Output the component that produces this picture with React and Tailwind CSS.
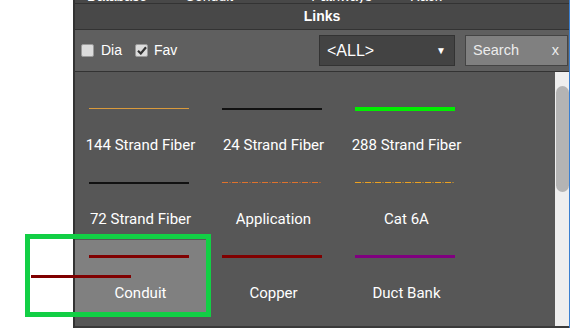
import React from 'react';

const items = [
  { name: '144 Strand Fiber', kind: 'solid', color: '#d99a3c', h: 1 },
  { name: '24 Strand Fiber', kind: 'solid', color: '#111111', h: 2 },
  { name: '288 Strand Fiber', kind: 'solid', color: '#00ee00', h: 4 },
  { name: '72 Strand Fiber', kind: 'solid', color: '#111111', h: 2 },
  { name: 'Application', kind: 'dash', color: '#e0722c', h: 1 },
  { name: 'Cat 6A', kind: 'dash', color: '#eea21e', h: 1 },
  { name: 'Conduit', kind: 'solid', color: '#800000', h: 3, active: true },
  { name: 'Copper', kind: 'solid', color: '#800000', h: 3 },
  { name: 'Duct Bank', kind: 'solid', color: '#800080', h: 3 },
];

function Swatch({ item }) {
  if (item.kind === 'dash') {
    return (
      <svg width="100" height="3" className="ml-[14px] block">
        <line x1="0" y1="1.5" x2="100" y2="1.5" stroke={item.color} strokeWidth="1.2" strokeDasharray="6 1.5 1 1.5" />
      </svg>
    );
  }
  return <div className="ml-[14px] w-[100px]" style={{ height: item.h, background: item.color }} />;
}

export default function App() {
  return (
    <div className="relative w-[570px] h-[328px] bg-white overflow-hidden flex" style={{ fontFamily: '"Liberation Sans", Arial, sans-serif' }}>
      <div className="w-[73px] shrink-0" />

      {/* Panel */}
      <div className="flex-1 flex flex-col border-l-2 border-r border-l-[#333] border-r-[#3a7fd0] bg-[#575757]">
        {/* clipped row from above */}
        <div className="h-[3px] bg-[#484848] overflow-hidden relative text-white text-[14px] leading-none">
          <div className="flex -mt-[11px] pl-[12px] gap-[38px]">
            <span>Database</span>
            <span>Conduit</span>
            <span className="ml-[40px]">Pathways</span>
            <span>Rack</span>
          </div>
        </div>
        <div className="h-[27px] border-t border-b border-[#333] bg-[#484848] flex items-center justify-center text-white font-bold text-[14px]">
          Links
        </div>

        {/* Toolbar */}
        <div className="h-[42px] bg-[#5f5f5f] border-b border-[#333] flex items-center pl-[6px] pr-[1px] text-white text-[14px]">
          <label className="flex items-center">
            <span className="w-[13px] h-[13px] rounded-[2px] bg-[#dcdcdc] border border-[#9a9a9a]" />
            <span className="ml-[7px]">Dia</span>
          </label>
          <label className="flex items-center ml-[13px]">
            <span className="w-[13px] h-[13px] rounded-[2px] bg-[#dcdcdc] border border-[#9a9a9a] flex items-center justify-center">
              <svg width="10" height="9" viewBox="0 0 10 9">
                <path d="M1 4.8 L3.8 7.5 L9 1.2" fill="none" stroke="#333" strokeWidth="2.2" />
              </svg>
            </span>
            <span className="ml-[6px]">Fav</span>
          </label>

          <div className="ml-auto w-[136px] h-[31px] bg-[#434343] border border-[#333] flex items-center pl-[7px] pr-[8px] text-[16px]">
            <span>&lt;ALL&gt;</span>
            <span className="ml-auto text-[10px]">▼</span>
          </div>
          <div className="ml-[10px] w-[103px] h-[31px] bg-[#808080] border border-[#444] flex items-center pl-[7px] pr-[8px] text-[14.5px] text-[#ececec]">
            <span>Search</span>
            <span className="ml-auto">x</span>
          </div>
        </div>

        {/* Content */}
        <div className="flex-1 flex min-h-0 border-b-2 border-[#3a3a3a]">
          <div className="flex-1 pt-[20px] grid grid-cols-[131px_131px_131px] gap-x-[2px] gap-y-[1px] content-start" style={{ fontFamily: 'Roboto, sans-serif' }}>
            {items.map((it) => (
              <div key={it.name} className={`h-[73px] flex flex-col ${it.active ? 'bg-[#808080]' : ''}`}>
                <div className="h-[33px] flex items-center">
                  <Swatch item={it} />
                </div>
                <div className="mt-[10px] text-center text-white text-[15px] leading-[20px]">{it.name}</div>
              </div>
            ))}
          </div>
          <div className="w-[14px] bg-[#eeeeee] pt-[14px]">
            <div className="ml-[1px] w-[13px] h-[106px] rounded-full bg-[#b4b4b4]" />
          </div>
        </div>
      </div>

      {/* drag ghost + highlight */}
      <div className="absolute left-[25px] top-[234px] w-[186px] h-[83px] border-[5px] border-[#12cf45]" />
      <div className="absolute left-[31px] top-[275px] w-[100px] h-[3px] bg-[#800000]" />
    </div>
  );
}
